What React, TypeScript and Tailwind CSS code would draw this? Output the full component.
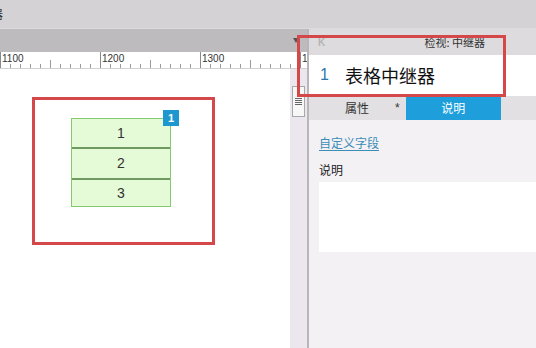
import React from "react";

const cjk = { fontFamily: '"Noto Sans CJK SC", "Liberation Sans", sans-serif' };
const sans = { fontFamily: '"Liberation Sans", Arial, sans-serif' };

function Ruler() {
  const ticks: React.ReactNode[] = [];
  for (let x = 0; x <= 310; x += 10) {
    const major = x % 100 === 0;
    const mid = x % 50 === 0;
    const y1 = major ? 0 : mid ? 8 : 12;
    ticks.push(<line key={x} x1={x + 0.5} x2={x + 0.5} y1={y1} y2={17} stroke={major ? "#8a8a8a" : "#9a9a9a"} strokeWidth={1} />);
  }
  return (
    <svg width="307" height="17" className="block">
      <rect x="0" y="0" width="307" height="17" fill="#ffffff" />
      {ticks}
      <line x1="0" x2="307" y1="16.5" y2="16.5" stroke="#d0d0d0" />
      {["1100", "1200", "1300", "1400"].map((t, i) => (
        <text key={t} x={i * 100 + 2} y={10} fontSize="10" fill="#333" fontFamily='"Liberation Sans", Arial, sans-serif'>
          {t}
        </text>
      ))}
    </svg>
  );
}

export default function App() {
  return (
    <div className="relative w-[536px] h-[348px] overflow-hidden flex flex-col bg-[#d5d2d5]" style={cjk}>
      {/* top bar */}
      <div className="h-[29px] shrink-0 bg-[#d5d2d5] border-b border-[#dedbde] overflow-hidden">
        <div className="ml-[-9px] mt-[6px] text-[12px] leading-[16px] text-[#333]">器</div>
      </div>
      <div className="flex flex-1 min-h-0">
        {/* left area */}
        <div className="w-[307px] shrink-0 flex flex-col">
          <div className="h-[23px] shrink-0 bg-[#bdbbbd] flex items-center justify-end pr-[8px]">
            <div className="w-0 h-0 border-l-[3px] border-r-[3px] border-t-[5px] border-l-transparent border-r-transparent border-t-[#555]" />
          </div>
          <Ruler />
          <div className="flex flex-1 min-h-0">
            <div className="relative w-[290px] bg-white pl-[71px] pt-[49px]">
              <div className="relative w-[100px] bg-[#e5fad6] border border-[#84c870] text-[14px] text-[#333]" style={sans}>
                <div className="h-[28px] flex items-center justify-center">1</div>
                <div className="h-[31px] flex items-center justify-center border-t-2 border-[#6f9a62]">2</div>
                <div className="h-[28px] flex items-center justify-center border-t-2 border-[#6f9a62]">3</div>
                <div className="absolute right-[-9px] top-[-9px] w-[16px] h-[16px] bg-[#1d97d0] text-white text-[11px] font-bold flex items-center justify-center">1</div>
              </div>
              <div className="absolute left-[32px] top-[28px] w-[183px] h-[148px] border-[3px] border-[#d4484a]" />
            </div>
            <div className="w-[17px] bg-[#ece7ee] pt-[17px] pl-[2px]">
              <div className="w-[13px] h-[31px] bg-[#f7f7f7] border border-[#a8a8a8] flex flex-col items-center justify-center gap-[1px]">
                <div className="w-[7px] h-[1px] bg-[#666]" />
                <div className="w-[7px] h-[1px] bg-[#666]" />
                <div className="w-[7px] h-[1px] bg-[#666]" />
                <div className="w-[7px] h-[1px] bg-[#666]" />
              </div>
            </div>
          </div>
        </div>
        <div className="w-[2px] shrink-0 bg-[#b9b5b9]" />
        {/* right panel */}
        <div className="flex-1 flex flex-col bg-[#f4f1f5] min-w-0">
          <div className="h-[26px] shrink-0 bg-[#dddbdd] flex items-center justify-between pl-[9px] pr-[51px]">
            <span className="text-[10px] text-[#b5b3b5] font-bold" style={sans}>K</span>
            <span className="text-[11px] text-[#333]">检视: 中继器</span>
          </div>
          <div className="h-[41px] shrink-0 bg-white flex items-center pl-[11px] pb-[1px]">
            <span className="text-[16px] text-[#2a78ad] w-[25px]" style={sans}>1</span>
            <span className="text-[18px] text-[#111] leading-[24px]">表格中继器</span>
          </div>
          <div className="h-[24px] shrink-0 bg-[#e2e0e2] flex items-center">
            <span className="ml-[36px] text-[12px] text-[#333]">属性</span>
            <span className="ml-[26px] text-[12px] text-[#333]" style={sans}>*</span>
            <div className="ml-[6px] w-[95px] h-full bg-[#1e9fdc] text-white text-[12px] flex items-center justify-center">说明</div>
          </div>
          <div className="flex flex-col pl-[10px] pt-[14px]">
            <span className="text-[12px] leading-[17px] text-[#3a8db5] underline underline-offset-2">自定义字段</span>
            <span className="mt-[10px] text-[12px] leading-[17px] text-[#222]">说明</span>
            <div className="mt-[4px] h-[70px] bg-white" />
          </div>
        </div>
      </div>
      <div className="absolute left-[297px] top-[35px] w-[209px] h-[62px] border-[3px] border-[#d4484a]" />
    </div>
  );
}
